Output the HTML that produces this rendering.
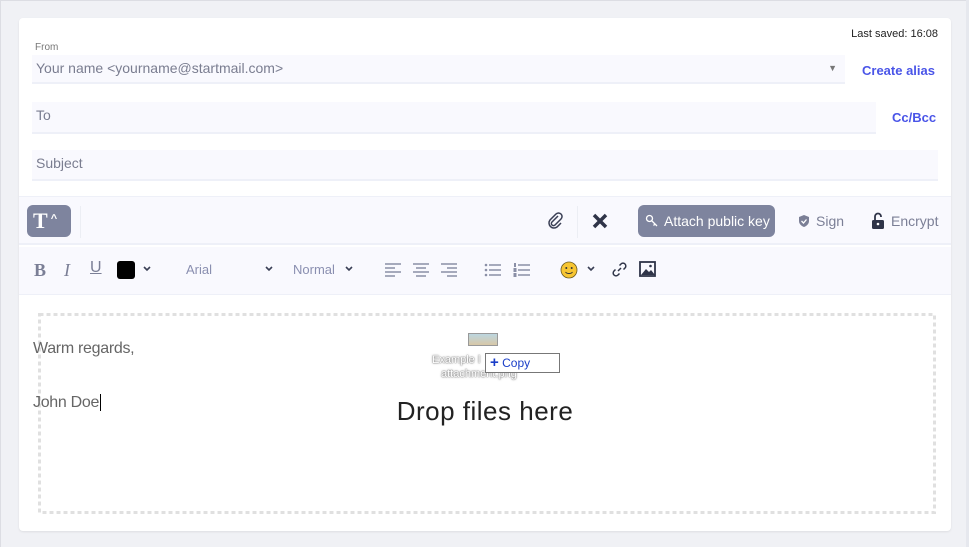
<!DOCTYPE html>
<html><head><meta charset="utf-8"><style>
*{box-sizing:border-box;margin:0;padding:0}
body{width:969px;height:547px;background:#f0f1f5;font-family:"Liberation Sans",sans-serif;position:relative;overflow:hidden}
.card{position:absolute;left:19px;top:18px;width:932px;height:513px;background:#fff;border-radius:4px;box-shadow:0 1px 2px rgba(0,0,0,.08)}
.a{position:absolute}
.inp{position:absolute;background:#f9f9fe;border-bottom:2px solid #eef0f8;color:#7a7d90;font-size:14px;padding-left:4px}
.lnk{position:absolute;color:#4a55e8;font-weight:bold;font-size:13px}
.tb{position:absolute;left:0;width:932px;background:#f9f9fe}
.g{color:#7b7f96}
.chev{position:absolute}
</style></head><body>
<div class="a" style="left:0;top:0;width:969px;height:1px;background:#dcdde3"></div>
<div class="a" style="left:0;top:0;width:1px;height:547px;background:#dcdde3"></div>
<div class="a" style="left:966px;top:0;width:3px;height:547px;background:#e6e8ee"></div>
<div class="card">
<div class="a" style="right:13px;top:10px;font-size:11px;color:#222">Last saved: 16:08</div>
<div class="a" style="left:16px;top:24px;font-size:10px;color:#777">From</div>
<div class="inp" style="left:13px;top:37px;width:813px;height:29px;line-height:26px">Your name &lt;yourname@startmail.com&gt;<span class="a" style="right:8px;top:0;font-size:9px;color:#777">▼</span></div>
<div class="lnk" style="left:843px;top:45px">Create alias</div>
<div class="inp" style="left:13px;top:84px;width:844px;height:32px;line-height:26px">To</div>
<div class="lnk" style="left:873px;top:92px">Cc/Bcc</div>
<div class="inp" style="left:13px;top:132px;width:906px;height:31px;line-height:26px">Subject</div>
<div class="tb" style="top:178px;height:49px;border-top:1px solid #eef0f8;border-bottom:2px solid #eef0f8"></div>
<div class="tb" style="top:229px;height:48px;border-bottom:1px solid #eef0f8"></div>
<div class="a" style="left:8px;top:187px;width:44px;height:32px;background:#7e849e;border-radius:6px;color:#fff;font-family:'Liberation Serif',serif;font-weight:bold;font-size:22px;padding:3px 0 0 6px">T<span style="font-size:11px;font-family:'Liberation Sans';vertical-align:6px"> ^</span></div>
<div class="a" style="left:61px;top:188px;width:1px;height:32px;background:#eceef4"></div>
<svg class="a" style="left:527px;top:193px" width="18" height="18" viewBox="0 0 18 18"><path d="M12 5 L6 11 a2 2 0 0 0 3 3 L15 8 a3.5 3.5 0 0 0 -5 -5 L4 9 a5 5 0 0 0 7 7 L15 12" fill="none" stroke="#3a3f55" stroke-width="1.5"/></svg>
<div class="a" style="left:558px;top:188px;width:1px;height:32px;background:#eceef4"></div>
<svg class="a" style="left:573px;top:195px" width="16" height="16" viewBox="0 0 16 16"><path d="M2 2L14 14M14 2L2 14" stroke="#2f3448" stroke-width="3.5"/></svg>
<div class="a" style="left:619px;top:187px;width:137px;height:32px;background:#7e849e;border-radius:6px;color:#fff;font-size:14px;line-height:32px;padding-left:26px">Attach public key</div>
<svg class="a" style="left:626px;top:196px" width="14" height="14" viewBox="0 0 14 14"><circle cx="4.5" cy="4.5" r="3" fill="none" stroke="#fff" stroke-width="1.3"/><path d="M6.5 6.5L12 12M10 10l-1.5 1.5" stroke="#fff" stroke-width="1.3"/></svg>
<svg class="a" style="left:779px;top:196px" width="12" height="14" viewBox="0 0 12 14"><path d="M6 1L11 3v4c0 3-2.5 5-5 6-2.5-1-5-3-5-6V3z" fill="#7b7f96"/><path d="M3.5 7l2 2 3-3.5" stroke="#fff" stroke-width="1.3" fill="none"/></svg>
<div class="a g" style="left:797px;top:195px;font-size:14px">Sign</div>
<svg class="a" style="left:852px;top:194px" width="14" height="17" viewBox="0 0 14 17"><path d="M4 8V4.5a3 3 0 0 1 6 0V5" fill="none" stroke="#2f3448" stroke-width="1.8"/><rect x="1" y="8" width="12" height="9" rx="1.5" fill="#2f3448"/><circle cx="7" cy="12" r="1.3" fill="#fff"/></svg>
<div class="a g" style="left:872px;top:195px;font-size:14px">Encrypt</div>
<div class="a g" style="left:15px;top:242px;font-family:'Liberation Serif',serif;font-weight:bold;font-size:18px">B</div>
<div class="a g" style="left:45px;top:242px;font-family:'Liberation Serif',serif;font-style:italic;font-size:18px">I</div>
<div class="a g" style="left:71px;top:241px;font-size:16px;text-decoration:underline">U</div>
<div class="a" style="left:98px;top:243px;width:18px;height:18px;background:#000;border-radius:3px"></div>
<svg class="chev" style="left:124px;top:248px" width="8" height="6" viewBox="0 0 8 6"><path d="M1 1l3 3 3-3" fill="none" stroke="#3a3f55" stroke-width="1.6"/></svg>
<div class="a" style="left:167px;top:244px;font-size:13px;color:#8a8fb0">Arial</div>
<svg class="chev" style="left:246px;top:248px" width="8" height="6" viewBox="0 0 8 6"><path d="M1 1l3 3 3-3" fill="none" stroke="#3a3f55" stroke-width="1.6"/></svg>
<div class="a" style="left:274px;top:244px;font-size:13px;color:#8a8fb0">Normal</div>
<svg class="chev" style="left:326px;top:248px" width="8" height="6" viewBox="0 0 8 6"><path d="M1 1l3 3 3-3" fill="none" stroke="#3a3f55" stroke-width="1.6"/></svg>
<svg class="a" style="left:366px;top:245px" width="150" height="14" viewBox="0 0 150 14"><g stroke="#8a8fa6" stroke-width="1.5"><path d="M0 1h16M0 5h10M0 9h16M0 13h10"/><path d="M28 1h16M31 5h10M28 9h16M31 13h10"/><path d="M56 1h16M62 5h10M56 9h16M62 13h10"/><path d="M104 2h12M104 7h12M104 12h12M133 2h12M133 7h12M133 12h12"/></g><g fill="#8a8fa6"><circle cx="101" cy="2" r="1.3"/><circle cx="101" cy="7" r="1.3"/><circle cx="101" cy="12" r="1.3"/><rect x="129" y="0" width="2" height="4"/><rect x="128.5" y="5" width="3" height="4"/><rect x="128.5" y="10" width="3" height="4"/></g></svg>
<svg class="a" style="left:541px;top:243px" width="18" height="18" viewBox="0 0 18 18"><circle cx="9" cy="9" r="8" fill="#f7c531" stroke="#6a5a20" stroke-width=".8"/><circle cx="6.3" cy="7" r="1" fill="#333"/><circle cx="11.7" cy="7" r="1" fill="#333"/><path d="M5.5 11a4 3 0 0 0 7 0" fill="none" stroke="#333" stroke-width="1"/></svg>
<svg class="chev" style="left:568px;top:248px" width="8" height="6" viewBox="0 0 8 6"><path d="M1 1l3 3 3-3" fill="none" stroke="#3a3f55" stroke-width="1.6"/></svg>
<svg class="a" style="left:592px;top:243px" width="17" height="17" viewBox="0 0 17 17"><g fill="none" stroke="#2f3448" stroke-width="1.5"><path d="M7 10l3-3"/><path d="M8.5 4.5l1.5-1.5a2.8 2.8 0 0 1 4 4l-1.5 1.5"/><path d="M8.5 12.5L7 14a2.8 2.8 0 0 1-4-4l1.5-1.5"/></g></svg>
<svg class="a" style="left:620px;top:243px" width="17" height="16" viewBox="0 0 17 16"><rect x="1" y="1" width="15" height="14" fill="none" stroke="#2f3448" stroke-width="1.8"/><path d="M2 14l5-6 3 3 2-2 4 5z" fill="#2f3448"/><circle cx="11.5" cy="5" r="1.3" fill="#2f3448"/></svg>
<svg class="a" style="left:19px;top:295px" width="898" height="201"><rect x="1.5" y="1.5" width="895" height="198" fill="none" stroke="#e0e0e0" stroke-width="3" stroke-dasharray="4 3"/></svg>
<div class="a" style="left:14px;top:322px;font-size:16px;color:#666;letter-spacing:-0.3px">Warm regards,</div>
<div class="a" style="left:14px;top:376px;font-size:16px;color:#666;letter-spacing:-0.3px">John Doe<span style="border-left:1px solid #000;margin-left:1px"></span></div>
<div class="a" style="left:449px;top:315px;width:30px;height:13px;background:linear-gradient(#bcd6e0,#d8c8a8);border:1px solid #999"></div>
<div class="a" style="left:413px;top:336px;font-size:11px;color:#fff;text-shadow:0 0 2px #777,0 0 1px #555">Example l</div>
<div class="a" style="left:422px;top:350px;font-size:11px;color:#fff;text-shadow:0 0 2px #777,0 0 1px #555">attachment.png</div>
<div class="a" style="left:466px;top:335px;width:75px;height:20px;border:1px solid #777;background:#fff;color:#1a3ec8;font-size:12px;line-height:18px;padding-left:4px"><b style="font-size:15px">+</b> Copy</div>
<div class="a" style="left:0;top:378px;width:932px;text-align:center;font-size:26px;color:#222;letter-spacing:0.5px">Drop files here</div>
</div>
</body></html>
